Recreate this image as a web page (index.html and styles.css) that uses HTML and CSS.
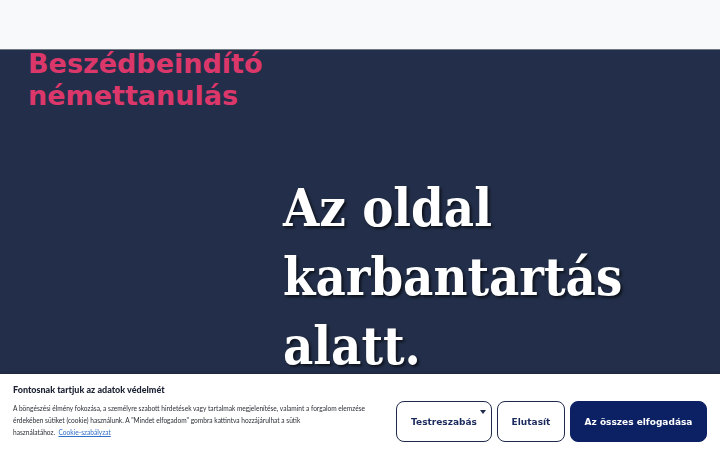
FILE: index.html
```html
<!DOCTYPE html>
<html lang="hu">
<head>
<meta charset="utf-8">
<title>Beszédbeindító némettanulás</title>
<link rel="stylesheet" href="styles.css">
</head>
<body>
<header class="topbar"></header>
<main class="main">
  <div class="brand">Beszédbeindító<br>némettanulás</div>
  <h1 class="hero">Az oldal<br>karbantartás<br>alatt.</h1>
</main>
<div class="cookie">
  <div class="cookie-text">
    <div class="cookie-title">Fontosnak tartjuk az adatok védelmét</div>
    <p class="cookie-body">A böngészési élmény fokozása, a személyre szabott hirdetések vagy tartalmak megjelenítése, valamint a forgalom elemzése érdekében sütiket (cookie) használunk. A "Mindet elfogadom" gombra kattintva hozzájárulhat a sütik <span class="nowrap">használatához.&nbsp; <a class="cookie-link" href="#">Cookie-szabályzat</a></span></p>
  </div>
  <div class="cookie-actions">
    <button class="btn btn-outline btn-custom">Testreszabás<span class="caret"></span></button>
    <button class="btn btn-outline btn-reject">Elutasít</button>
    <button class="btn btn-primary">Az összes elfogadása</button>
  </div>
</div>
</body>
</html>
```
FILE: styles.css
```css
html, body {
  margin: 0;
  padding: 0;
  height: 100%;
}
body {
  background: #232f4a;
  overflow: hidden;
}
.topbar {
  height: 49px;
  background: #f8f9fb;
  border-bottom: 1px solid #737a84;
}
.main {
  display: flex;
  flex-direction: column;
}
.brand {
  padding-left: 28px;
  margin-top: -2px;
  font-family: "DejaVu Sans", sans-serif;
  font-weight: bold;
  font-size: 27px;
  line-height: 32px;
  color: #dc376b;
}
.hero {
  margin: 61px 0 0 283px;
  font-family: "DejaVu Serif Condensed", "DejaVu Serif", serif;
  font-weight: bold;
  font-size: 52px;
  line-height: 69px;
  color: #ffffff;
  text-shadow: 2px 2px 3px rgba(0, 0, 0, 0.65);
}
.cookie {
  position: fixed;
  left: 0;
  right: 0;
  bottom: 0;
  height: 76px;
  box-sizing: border-box;
  background: #ffffff;
  display: flex;
  align-items: flex-start;
  justify-content: space-between;
  padding: 9px 13px 0 13px;
  box-shadow: 0 -1px 3px rgba(0, 0, 0, 0.2);
}
.cookie-text {
  width: 372px;
}
.cookie-title {
  font-family: Lato, "Noto Sans", sans-serif;
  font-weight: 900;
  font-size: 9px;
  line-height: 13px;
  color: #1c2233;
}
.cookie-body {
  margin: 6px 0 0 0;
  font-family: Lato, "Noto Sans", sans-serif;
  font-size: 6.6px;
  line-height: 12px;
  color: #2b2f36;
}
.nowrap {
  white-space: nowrap;
}
.cookie-link {
  color: #2f6fc9;
  text-decoration: underline;
}
.cookie-actions {
  display: flex;
  gap: 5px;
  margin-top: 18px;
}
.btn {
  position: relative;
  height: 41px;
  box-sizing: border-box;
  border-radius: 8px;
  font-family: "DejaVu Sans", sans-serif;
  font-weight: bold;
  font-size: 9px;
  padding: 0 6px;
  white-space: nowrap;
  cursor: pointer;
}
.btn-outline {
  background: #ffffff;
  border: 1.5px solid #1f2a4a;
  color: #1a2a5c;
}
.btn-custom {
  width: 96px;
}
.btn-reject {
  width: 68px;
}
.btn-primary {
  width: 137px;
  background: #0b2164;
  border: 1.5px solid #0b2164;
  color: #ffffff;
}
.caret {
  position: absolute;
  top: 8px;
  right: 5px;
  width: 0;
  height: 0;
  border-left: 3px solid transparent;
  border-right: 3px solid transparent;
  border-top: 4px solid #1f2a4a;
}
```
